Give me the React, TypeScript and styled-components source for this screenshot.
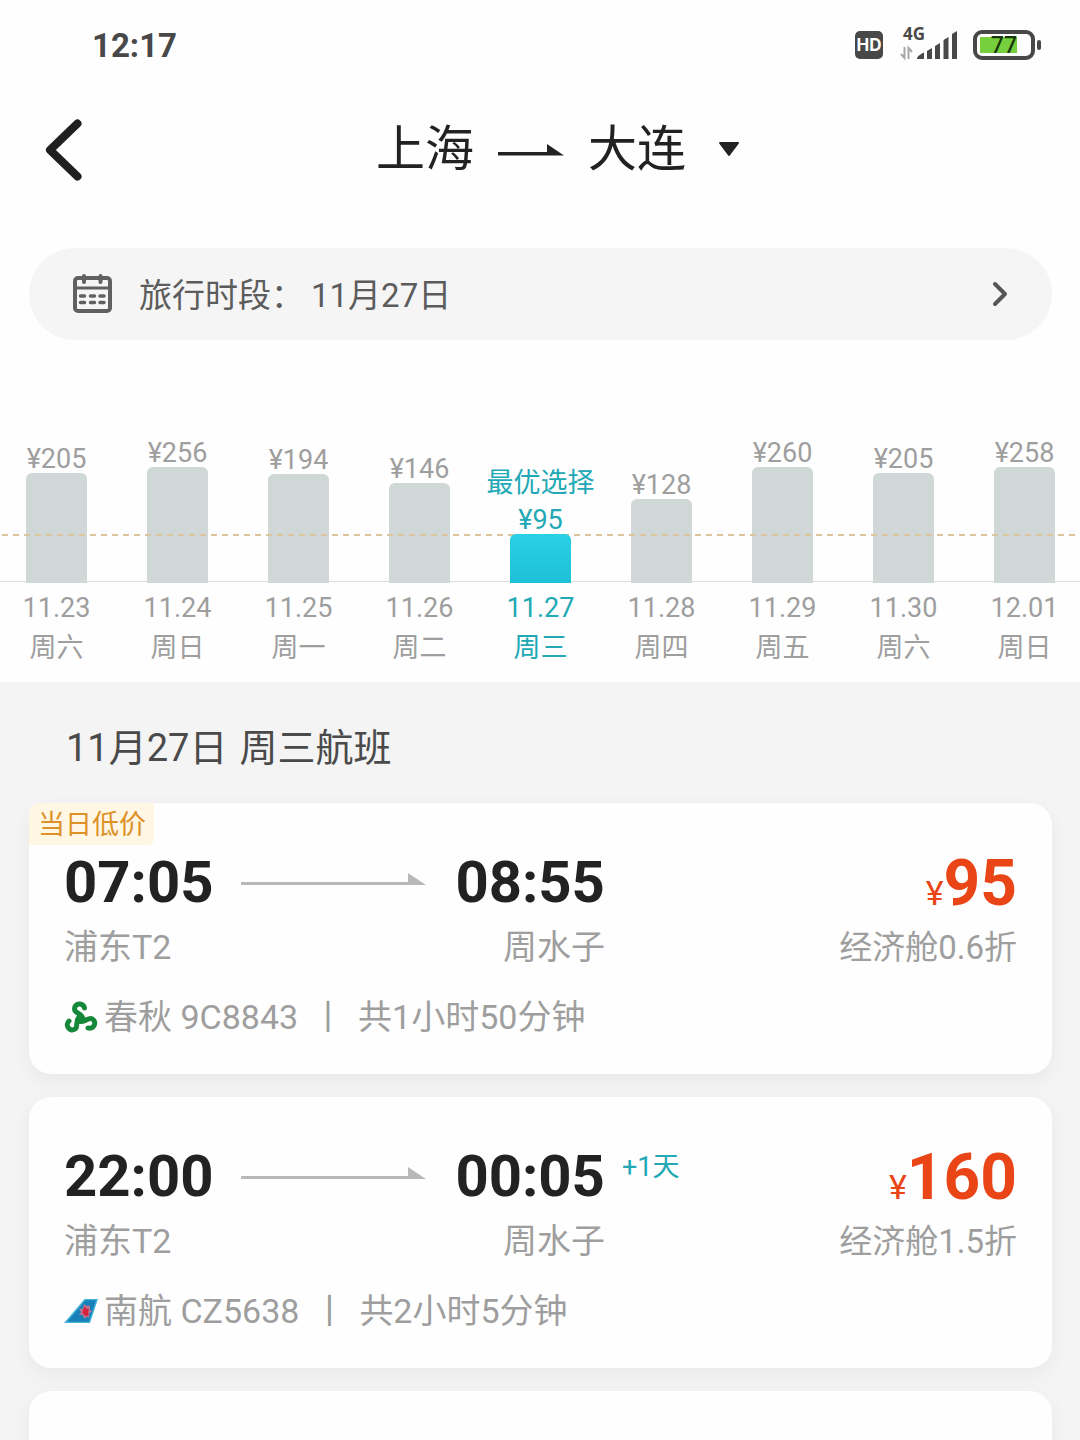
import React from "react";
import styled, { createGlobalStyle, css } from "styled-components";

const colors = {
  ink: "#222222",
  body: "#5c5c5c",
  muted: "#9e9e9e",
  status: "#484848",
  teal: "#22a9b5",
  price: "#ea4517",
  amber: "#dd9128",
  page: "#f4f4f4",
};

const GlobalStyle = createGlobalStyle`
  *, *::before, *::after { box-sizing: border-box; }
  body {
    margin: 0;
    background: ${colors.page};
    color: ${colors.ink};
    font-family: Roboto, "Noto Sans CJK SC", sans-serif;
    overflow-x: hidden;
  }
  button {
    border: 0;
    padding: 0;
    background: none;
    color: inherit;
    font: inherit;
    cursor: pointer;
  }
  svg { display: block; flex: none; }
  h1, h2, p, ul { margin: 0; padding: 0; font-weight: 400; }
  ul { list-style: none; }
`;

const Screen = styled.div`
  height: 100vh;
  overflow: hidden;
`;

const TopPanel = styled.div`
  background: #fefefe;
  padding-bottom: 14px;
`;

/* Status bar */

const StatusBar = styled.div`
  display: flex;
  align-items: center;
  justify-content: space-between;
  height: 90px;
  padding: 0 39px 0 92px;
  color: ${colors.status};
`;

const Clock = styled.time`
  padding-top: 2px;
  font-size: 33px;
  font-weight: 700;
  line-height: 40px;
`;

const StatusIcons = styled.div`
  display: flex;
  align-items: center;
`;

const HdMark = styled.span`
  width: 28px;
  height: 28px;
  margin-right: 17px;
  border-radius: 5px;
  background: ${colors.status};
  color: #fff;
  font: 700 17px/29px Inter, sans-serif;
  text-align: center;
`;

const Signal = styled.span`
  position: relative;
  margin-right: 16px;
`;

const NetworkLabel = styled.span`
  position: absolute;
  left: 3px;
  top: -4px;
  font: 700 17px/16px "Noto Sans", sans-serif;
`;

const Battery = styled.span`
  display: flex;
  align-items: center;
  gap: 2px;
  &::after {
    content: "";
    width: 4px;
    height: 10px;
    border-radius: 2px;
    background: ${colors.status};
  }
`;

const BatteryCell = styled.span<{ $level: number }>`
  width: 62px;
  height: 30px;
  padding: 3px;
  border: 4px solid ${colors.status};
  border-radius: 9px;
  background: linear-gradient(#76cf3c, #76cf3c) 3px 3px / ${(p) => Math.round(p.$level * 0.48)}px 16px no-repeat;
  color: #17380c;
  font: 500 23px/14px "Noto Sans", sans-serif;
  text-align: center;
`;

/* Route header */

const Header = styled.header`
  display: grid;
  grid-template-columns: 92px 1fr 56px;
  align-items: center;
  height: 120px;
`;

const BackButton = styled.button`
  padding: 10px 0 10px 45px;
`;

const RouteTitle = styled.h1`
  display: flex;
  justify-content: center;
`;

const RouteButton = styled.button`
  display: flex;
  align-items: center;
  gap: 24px;
  font-size: 49px;
  line-height: 64px;
`;

const Caret = styled.svg`
  margin-left: 8px;
`;

/* Travel period */

const PeriodButton = styled.button`
  display: flex;
  align-items: center;
  width: calc(100% - 57px);
  height: 92px;
  margin: 38px 28px 0 29px;
  padding: 0 44px;
  border-radius: 46px;
  background: #f5f5f5;
  color: ${colors.body};
  font-size: 33px;
  line-height: 48px;
  text-align: left;
`;

const PeriodLabel = styled.span`
  padding-top: 4px;
  margin: 0 7px 0 26px;
`;

const PeriodValue = styled.span`
  flex: 1;
  padding-top: 4px;
`;

/* Price chart */

const Chart = styled.div`
  position: relative;
  margin: 99px -5px 0 -4px;
`;

const Days = styled.ul`
  display: grid;
  grid-template-columns: repeat(9, 1fr);
  align-items: end;
`;

const AxisLine = styled.div`
  position: absolute;
  inset: auto 0 86px;
  height: 1px;
  background: #dcdcdc;
`;

const LowestLine = styled.div`
  position: absolute;
  inset: auto 0 132px;
  height: 2px;
  background: repeating-linear-gradient(90deg, #dcc49c 0 6px, transparent 6px 11px);
  background-position-x: 6px;
  pointer-events: none;
`;

const DayButton = styled.button<{ $active: boolean }>`
  display: flex;
  flex-direction: column;
  align-items: center;
  width: 100%;
  color: ${(p) => (p.$active ? colors.teal : colors.muted)};
  font-size: 27px;
  line-height: 28px;
`;

const BestLabel = styled.span`
  margin-bottom: 9px;
`;

const Bar = styled.span<{ $active: boolean }>`
  position: relative;
  z-index: ${(p) => (p.$active ? 1 : "auto")};
  width: 61px;
  margin-bottom: 6px;
  border-radius: 6px 6px 0 0;
  background: ${(p) => (p.$active ? "linear-gradient(#2ad0e5, #1dc0d8)" : "#cfd7d7")};
`;

const DayText = styled.span`
  line-height: 39px;
`;

const WeekdayText = styled(DayText)`
  margin-top: 1px;
`;

/* Flight list */

const Results = styled.main`
  padding: 38px 28px 0 29px;
`;

const ResultsTitle = styled.h2`
  display: flex;
  gap: 12px;
  padding: 0 37px;
  color: #4a4a4a;
  font-size: 38px;
  line-height: 56px;
`;

const FlightList = styled.ul`
  display: grid;
  gap: 23px;
  margin-top: 27px;
`;

const Card = styled.article`
  position: relative;
  min-height: 271px;
  padding: 44px 35px 30px 35px;
  border-radius: 22px;
  background: #fefefe;
  box-shadow: 0 6px 20px rgba(0, 0, 0, 0.05);
`;

const LowPriceTag = styled.span`
  position: absolute;
  top: 0;
  left: 0;
  padding: 2px 8px 0 9px;
  border-radius: 10px 0 6px 0;
  background: #fff6e4;
  color: ${colors.amber};
  font-size: 27px;
  line-height: 40px;
`;

const Summary = styled.div`
  display: flex;
  align-items: flex-start;
`;

const Stop = styled.div<{ $end?: boolean }>`
  text-align: ${(p) => (p.$end ? "right" : "left")};
`;

const StopTime = styled.time`
  display: block;
  font-size: 58px;
  font-weight: 700;
  line-height: 70px;
`;

const placeText = css`
  color: ${colors.muted};
  line-height: 48px;
`;

const StopName = styled.p`
  ${placeText}
  margin-top: 6px;
  font-size: 34px;
`;

const PathArrow = styled.svg`
  margin: 26px 29px 0 28px;
`;

const NextDay = styled.span`
  margin: 6px 0 0 17px;
  color: ${colors.teal};
  font-size: 27px;
  line-height: 40px;
`;

const Fare = styled.div`
  margin-left: auto;
  text-align: right;
`;

const Price = styled.p`
  color: ${colors.price};
  font-size: 64px;
  font-weight: 700;
  line-height: 74px;
`;

const Currency = styled.span`
  font-size: 34px;
  font-weight: 400;
  line-height: 34px;
`;

const Cabin = styled.p`
  ${placeText}
  margin-top: 3px;
  font-size: 33px;
`;

const Carrier = styled.div`
  display: flex;
  align-items: center;
  margin-top: 21px;
  color: ${colors.muted};
  font-size: 34px;
  line-height: 48px;
`;

const CarrierText = styled.p`
  display: flex;
  gap: 13px;
  margin-left: 6px;
`;

const days = [
  { date: "11.23", weekday: "周六", price: 205, bar: 110 },
  { date: "11.24", weekday: "周日", price: 256, bar: 116 },
  { date: "11.25", weekday: "周一", price: 194, bar: 109 },
  { date: "11.26", weekday: "周二", price: 146, bar: 100 },
  { date: "11.27", weekday: "周三", price: 95, bar: 49, best: true },
  { date: "11.28", weekday: "周四", price: 128, bar: 84 },
  { date: "11.29", weekday: "周五", price: 260, bar: 116 },
  { date: "11.30", weekday: "周六", price: 205, bar: 110 },
  { date: "12.01", weekday: "周日", price: 258, bar: 116 },
];

const logoArm = "M19.500 7C18.500 1.500 9.500 1.500 9.500 8 9.500 12.500 17 12 18 18";

const SpringLogo = () => (
  <svg width="34" height="32" viewBox="-1 0 34 32" fill="none" stroke="#16883a" strokeWidth="5" strokeLinecap="round">
    <path d={logoArm} />
    <path d={logoArm} transform="rotate(120 15.500 18)" />
    <path d={logoArm} transform="rotate(240 15.500 18)" />
  </svg>
);

const SouthernLogo = () => (
  <svg width="34" height="24" viewBox="0 0 34 24">
    <path d="M0 24 20.500 0H34l-8 24z" fill="#45b4d8" />
    <path d="M3 22.800 21.500 1.200H32l-7 21.600z" fill="#1681b8" />
    <path d="m20 5 3 2 3-.5v4l2 2-3 2 .5 4-3-.5-2 2-1.500-3.500-4-1 2-2.500-2-3 4-.5z" fill="#b77391" />
    <path d="m20.500 7.500 2 2 2.500 1-1 2.500.5 3.500-3 .5-3-3 .5-3z" fill="#d8213c" />
  </svg>
);

type Flight = {
  depart: string;
  arrive: string;
  nextDay?: string;
  price: number;
  cabin: string;
  carrier: string;
  duration: string;
  tag?: string;
  Logo: () => React.JSX.Element;
};

const flights: Flight[] = [
  {
    depart: "07:05",
    arrive: "08:55",
    price: 95,
    cabin: "经济舱0.6折",
    carrier: "春秋 9C8843",
    duration: "共1小时50分钟",
    tag: "当日低价",
    Logo: SpringLogo,
  },
  {
    depart: "22:00",
    arrive: "00:05",
    nextDay: "+1天",
    price: 160,
    cabin: "经济舱1.5折",
    carrier: "南航 CZ5638",
    duration: "共2小时5分钟",
    Logo: SouthernLogo,
  },
];

const FlightCard = ({ flight }: { flight: Flight }) => (
  <Card>
    {flight.tag && <LowPriceTag>{flight.tag}</LowPriceTag>}
    <Summary>
      <Stop>
        <StopTime>{flight.depart}</StopTime>
        <StopName>浦东T2</StopName>
      </Stop>
      <PathArrow width="185" height="14" viewBox="0 0 185 14" fill="#b8b8b8">
        <path d="M0 9h167V0l18 12H0z" />
      </PathArrow>
      <Stop $end>
        <StopTime>{flight.arrive}</StopTime>
        <StopName>周水子</StopName>
      </Stop>
      {flight.nextDay && <NextDay>{flight.nextDay}</NextDay>}
      <Fare>
        <Price>
          <Currency>¥</Currency>
          {flight.price}
        </Price>
        <Cabin>{flight.cabin}</Cabin>
      </Fare>
    </Summary>
    <Carrier>
      <flight.Logo />
      <CarrierText>
        <span>{flight.carrier}</span>
        <span>丨</span>
        <span>{flight.duration}</span>
      </CarrierText>
    </Carrier>
  </Card>
);

export default function App() {
  return (
    <>
      <GlobalStyle />
      <Screen lang="zh-CN">
        <TopPanel>
          <StatusBar>
            <Clock>12:17</Clock>
            <StatusIcons>
              <HdMark>HD</HdMark>
              <Signal>
                <NetworkLabel>4G</NetworkLabel>
                <svg width="57" height="30" viewBox="0 0 57 30" fill={colors.status}>
                  <path d="M17 29c0-3 4-5 7-6.500V29zM27 21l5-3v11h-5zM35 16l5-3v16h-5zM43.500 10l5-3v22h-5zM52 4l5-3v28h-5z" />
                  <path d="M4.500 17v11L1 24M8.500 29V18l3.500 4" fill="none" stroke="#a8a8a8" strokeWidth="2" />
                </svg>
              </Signal>
              <Battery>
                <BatteryCell $level={77}>77</BatteryCell>
              </Battery>
            </StatusIcons>
          </StatusBar>

          <Header>
            <BackButton aria-label="返回">
              <svg width="38" height="62" viewBox="0 0 38 62" fill="none" stroke="#202020" strokeWidth="8" strokeLinecap="round" strokeLinejoin="round">
                <path d="M32.500 4.500 5 31l27.500 26.500" />
              </svg>
            </BackButton>
            <RouteTitle>
              <RouteButton>
                <span>上海</span>
                <svg width="66" height="14" viewBox="0 0 66 14" fill={colors.ink}>
                  <path d="M0 9h49V1l17 11.500H0z" />
                </svg>
                <span>大连</span>
                <Caret width="22" height="16" viewBox="0 0 22 16" fill={colors.ink} stroke={colors.ink} strokeWidth="2" strokeLinejoin="round">
                  <path d="M2 1h18l-9 12z" />
                </Caret>
              </RouteButton>
            </RouteTitle>
          </Header>

          <PeriodButton>
            <svg width="40" height="40" viewBox="0 0 40 40" fill="none" stroke="#606060" strokeWidth="4">
              <rect x="2" y="4" width="35" height="33" rx="3" />
              <path d="M2 14h35" strokeWidth="3" />
              <path d="M11 2v6M27.500 2v6" strokeLinecap="round" />
              <path d="M7.500 22h4M17.500 22h4M27 22h4M7.500 28.500h4M17.500 28.500h4M27 28.500h4" strokeWidth="3.500" strokeLinecap="round" />
            </svg>
            <PeriodLabel>旅行时段：</PeriodLabel>
            <PeriodValue>11月27日</PeriodValue>
            <svg width="16" height="26" viewBox="0 0 16 26" fill="none" stroke="#555" strokeWidth="4" strokeLinecap="round" strokeLinejoin="round">
              <path d="m3 3 10 10L3 23" />
            </svg>
          </PeriodButton>

          <Chart>
            <AxisLine />
            <Days>
              {days.map((day) => (
                <li key={day.date}>
                  <DayButton $active={!!day.best}>
                    {day.best && <BestLabel>最优选择</BestLabel>}
                    <span>¥{day.price}</span>
                    <Bar $active={!!day.best} style={{ height: day.bar }} />
                    <DayText>{day.date}</DayText>
                    <WeekdayText>{day.weekday}</WeekdayText>
                  </DayButton>
                </li>
              ))}
            </Days>
            <LowestLine />
          </Chart>
        </TopPanel>

        <Results>
          <ResultsTitle>
            <span>11月27日</span>
            <span>周三航班</span>
          </ResultsTitle>
          <FlightList>
            {flights.map((flight) => (
              <li key={flight.carrier}>
                <FlightCard flight={flight} />
              </li>
            ))}
            <li>
              <Card />
            </li>
          </FlightList>
        </Results>
      </Screen>
    </>
  );
}
